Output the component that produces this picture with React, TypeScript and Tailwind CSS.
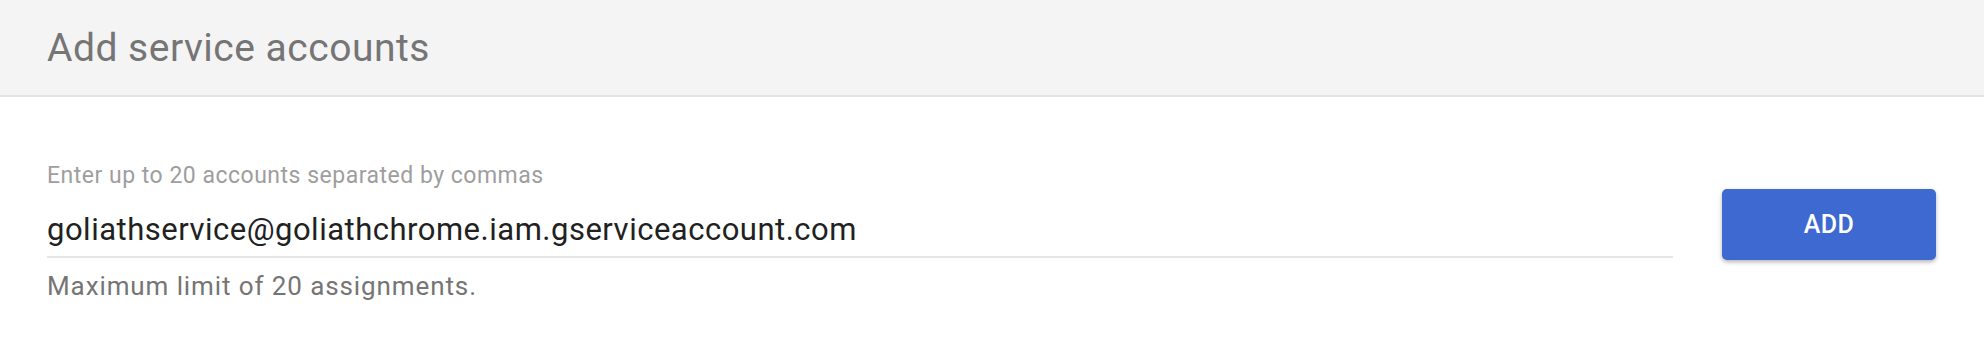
import React from "react";

export default function App() {
  return (
    <div className="w-[1984px] h-[346px] bg-white font-['Roboto',sans-serif]">
      <div className="h-[97px] bg-[#f4f4f4] border-b-2 border-[#e3e3e3] flex items-center pl-[47px]">
        <h1 className="text-[39px] tracking-[0.5px] font-normal text-[#757575] leading-none pt-[1px]">Add service accounts</h1>
      </div>

      <div className="flex items-start pl-[47px] pr-[47px] pt-[67px]">
        <div className="w-[1626px]">
          <p className="text-[23px] tracking-[0.5px] text-[#9e9e9e] leading-none">Enter up to 20 accounts separated by commas</p>
          <div className="border-b-2 border-[#e6e6e6] pt-[27px] pb-[9px]">
            <span className="text-[31px] tracking-[0.5px] text-[#212121] leading-none">
              goliathservice@goliathchrome.iam.gserviceaccount.com
            </span>
          </div>
          <p className="text-[26px] tracking-[0.9px] text-[#757575] leading-none pt-[15px]">Maximum limit of 20 assignments.</p>
        </div>
        <button className="ml-[49px] mt-[25px] w-[214px] h-[71px] rounded-[5px] bg-[#3d69d0] text-white text-[25px] tracking-[0.5px] font-medium shadow-[0_2px_4px_rgba(0,0,0,0.3)]">
          ADD
        </button>
      </div>
    </div>
  );
}
